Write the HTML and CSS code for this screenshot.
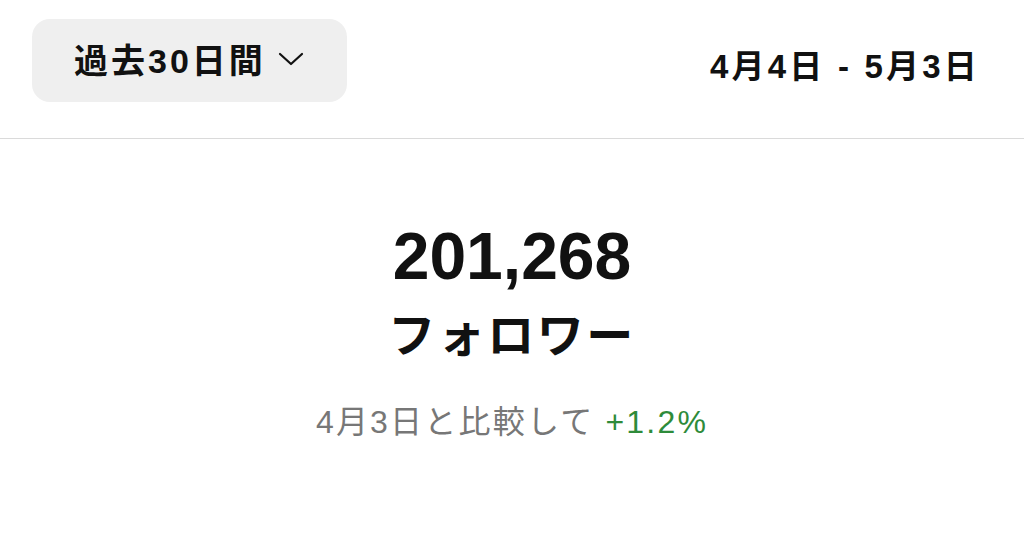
FILE: index.html
```html
<!DOCTYPE html>
<html lang="ja">
<head>
<meta charset="utf-8">
<link rel="stylesheet" href="styles.css">
</head>
<body>
<div class="page">
  <header class="topbar">
    <button class="range">
      <span class="range-label">過去30日間</span>
      <svg class="chev" width="26" height="16" viewBox="0 0 26 16"><path d="M2 3 L13 13 L24 3" fill="none" stroke="#111" stroke-width="2.2" stroke-linecap="round" stroke-linejoin="round"/></svg>
    </button>
    <div class="dates">4月4日 - 5月3日</div>
  </header>
  <main class="stats">
    <div class="count">201,268</div>
    <div class="label">フォロワー</div>
    <div class="compare">4月3日と比較して <span class="up">+1.2%</span></div>
  </main>
</div>
</body>
</html>
```
FILE: styles.css
```css
html, body {
  margin: 0;
  padding: 0;
  background: #ffffff;
}
body {
  font-family: "Liberation Sans", "Noto Sans CJK JP", sans-serif;
  color: #111111;
  width: 1024px;
  height: 536px;
  overflow: hidden;
}
.page {
  display: flex;
  flex-direction: column;
  height: 100%;
}
.topbar {
  display: flex;
  align-items: center;
  justify-content: space-between;
  height: 139px;
  box-sizing: border-box;
  padding: 0 44px 0 32px;
  border-bottom: 1px solid #dadada;
}
.range {
  display: flex;
  align-items: center;
  gap: 12px;
  height: 83px;
  width: 315px;
  margin-top: -18px;
  padding: 0 0 0 42px;
  box-sizing: border-box;
  border: none;
  border-radius: 18px;
  background: #efefef;
  font-family: inherit;
  color: #111;
  cursor: pointer;
}
.range-label {
  font-size: 34px;
  font-weight: 700;
  letter-spacing: 3px;
  margin-top: -4px;
}
.chev {
  margin-top: -2px;
}
.dates {
  font-size: 33px;
  font-weight: 700;
  letter-spacing: 3.2px;
  margin-top: -11px;
}
.stats {
  flex: 1;
  display: flex;
  flex-direction: column;
  align-items: center;
  background: #ffffff;
  padding-top: 77px;
}
.count {
  font-size: 66px;
  font-weight: 700;
  line-height: 80px;
}
.label {
  font-size: 47px;
  font-weight: 700;
  line-height: 60px;
  margin-top: 10px;
  letter-spacing: 2.5px;
}
.compare {
  margin-top: 36px;
  font-size: 32px;
  line-height: 40px;
  color: #777777;
  letter-spacing: 2.2px;
}
.up {
  color: #2e8b3a;
}
```
